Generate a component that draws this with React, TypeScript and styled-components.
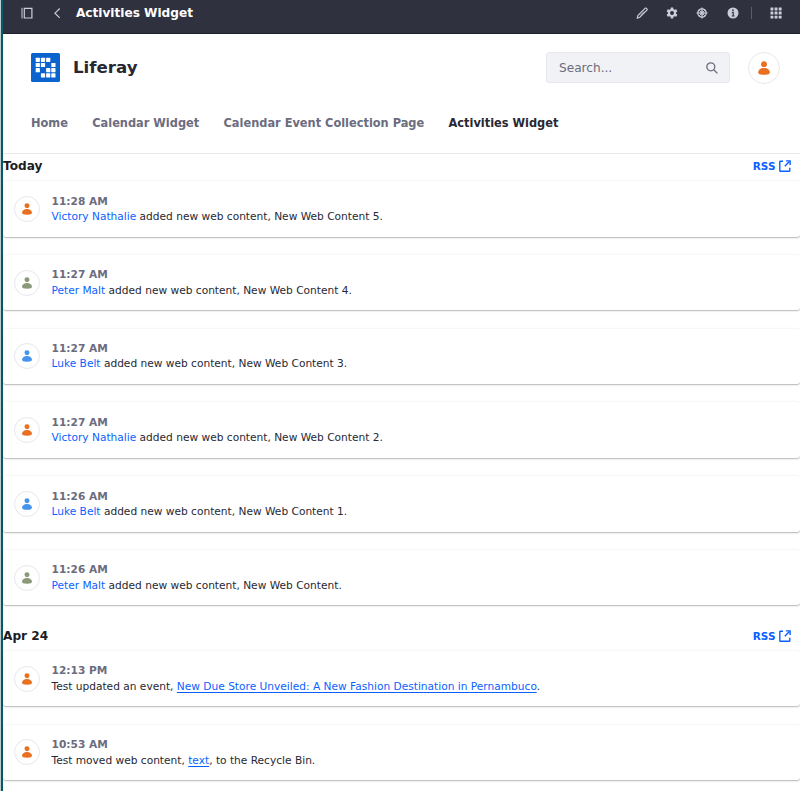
import React from "react";
import styled, { createGlobalStyle } from "styled-components";

const Global = createGlobalStyle`
  * { box-sizing: border-box; }
  html, body { margin: 0; background: #fff; }
  body { overflow: hidden; }
`;

const Page = styled.div`
  width: 800px;
  height: 791px;
  overflow: hidden;
  display: flex;
  background: #fff;
  font-family: "DejaVu Sans", sans-serif;
  color: #272833;
`;

const SideEdge = styled.div`
  flex: none;
  width: 3px;
  background: #005c68;
  border-left: 1px solid #c1c9cc;
`;

const Main = styled.div`
  flex: 1;
  min-width: 0;
`;

const ControlBar = styled.header`
  height: 34px;
  display: flex;
  align-items: flex-start;
  justify-content: space-between;
  background: #30313f;
  border-bottom: 1px solid #1e1f2c;
  color: #cdced9;
`;

const BarGroup = styled.div<{ $pl?: number; $pr?: number }>`
  display: flex;
  align-items: center;
  height: 26px;
  padding-left: ${(p) => p.$pl ?? 0}px;
  padding-right: ${(p) => p.$pr ?? 0}px;
`;

const BarIcon = styled.svg<{ $gap?: number }>`
  display: block;
  flex: none;
  width: 12px;
  height: 12px;
  margin-left: ${(p) => p.$gap ?? 0}px;
`;

const BarTitle = styled.h1`
  margin: 0 0 0 12.5px;
  font-size: 12.14px;
  line-height: 26px;
  font-weight: 700;
  color: #fff;
`;

const BarDivider = styled.span`
  width: 1px;
  height: 12px;
  margin-left: 12px;
  background: #5c5d6c;
`;

const SiteHeader = styled.div`
  height: 67px;
  padding: 0 20px 0 28px;
  display: flex;
  align-items: center;
`;

const Logo = styled.svg`
  width: 29px;
  height: 29px;
`;

const SiteName = styled.span`
  margin-left: 13px;
  padding-bottom: 1px;
  font-size: 16.65px;
  font-weight: 700;
  flex: 1;
`;

const SearchBox = styled.div`
  width: 184px;
  height: 31px;
  margin-right: 18px;
  padding: 0 11px 0 12px;
  display: flex;
  align-items: center;
  justify-content: space-between;
  border: 1px solid #e7e7ed;
  border-radius: 3px;
  background: #f1f2f5;
  color: #6b6c7e;
  font-size: 12.14px;
`;

const Avatar = styled.span<{ $size: number }>`
  flex: none;
  display: flex;
  align-items: center;
  justify-content: center;
  width: ${(p) => p.$size}px;
  height: ${(p) => p.$size}px;
  border: 1px solid #e7e7ed;
  border-radius: 50%;
  background: #fff;
`;

const Nav = styled.nav`
  height: 53px;
  padding: 13px 0 0 28px;
  display: flex;
  gap: 24.3px;
  border-bottom: 1px solid #e7e7ed;
`;

const NavLink = styled.a<{ $active?: boolean }>`
  font-size: 11.38px;
  line-height: 19px;
  font-weight: 700;
  white-space: nowrap;
  color: ${(p) => (p.$active ? "#272833" : "#6b6c7e")};
`;

const DayHeader = styled.div<{ $later?: boolean }>`
  height: ${(p) => (p.$later ? 26.5 : 26)}px;
  margin-top: ${(p) => (p.$later ? 18 : 0)}px;
  padding-right: 9px;
  padding-bottom: ${(p) => (p.$later ? 0.5 : 1.5)}px;
  display: flex;
  align-items: center;
  justify-content: space-between;
`;

const DayTitle = styled.h2`
  margin: 0;
  font-size: 12.14px;
  line-height: 18px;
  font-weight: 700;
  color: #1c1c24;
`;

const RssLink = styled.a`
  display: flex;
  align-items: center;
  gap: 3.5px;
  font-size: 10.5px;
  font-weight: 700;
  color: #0b5fff;
`;

const CardList = styled.div`
  display: flex;
  flex-direction: column;
  gap: 17.25px;
`;

const Card = styled.article`
  height: 56.5px;
  padding-left: 11px;
  display: flex;
  align-items: center;
  gap: 11.5px;
  border-top: 1px solid #f8f8f9;
  border-radius: 3px;
  background: #fff;
  box-shadow: 0 1px 1.5px rgba(0, 0, 0, 0.29);
`;

const CardText = styled.div`
  font-size: 10.61px;
  line-height: 15.3px;
  padding-top: 0.3px;
  white-space: nowrap;
  color: #272833;
`;

const Time = styled.div`
  font-weight: 700;
  color: #6b6c7e;
`;

const Message = styled.div<{ $linked?: boolean }>`
  padding-top: ${(p) => (p.$linked ? 0.5 : 0)}px;
`;

const Person = styled.a`
  color: #0b5fff;
`;

const UnderlinedLink = styled.a`
  color: #0b5fff;
  text-decoration: underline;
  text-decoration-thickness: 1px;
  text-underline-offset: 2px;
  text-decoration-skip-ink: none;
`;

const ORANGE = "#e87020";
const GREEN = "#8a9a78";
const BLUE = "#4593ec";

const UserGlyph = ({ color, size }: { color: string; size: number }) => (
  <svg width={size} height={size} viewBox="0 0 14 14" fill={color}>
    <circle cx="7" cy="3.2" r="2.900" />
    <path d="M7 7.100C3.400 7.100 1.200 9.200 1.200 11.500c0 1.500 1.600 2.200 5.800 2.200s5.800-.7 5.800-2.200C12.800 9.200 10.600 7.100 7 7.100z" />
  </svg>
);

const LOGO_CELLS = [
  [0, 0], [1, 0], [2, 0],
  [0, 1], [1, 1], [3, 1],
  [0, 2], [2, 2], [3, 2],
  [1, 3], [2, 3], [3, 3],
];

const Rss = () => (
  <RssLink>
    RSS
    <svg width="12" height="12" viewBox="0 0 12 12" fill="none" stroke="#0b5fff" strokeWidth="1.4">
      <path d="M4 1.200H1.400Q.8 1.200.8 1.800v8.900q0 .6.6.6h8.800q.6 0 .6-.6V7.800M5.800 6.200l4.600-4.600" />
      <path d="M6.900.9h4.200v4.200" />
    </svg>
  </RssLink>
);

type Activity = { time: string; color: string; linked?: boolean; body: React.ReactNode };

const content = (time: string, name: string, color: string, title: string): Activity => ({
  time,
  color,
  body: <><Person>{name}</Person> added new web content, {title}.</>,
});

const today: Activity[] = [
  content("11:28 AM", "Victory Nathalie", ORANGE, "New Web Content 5"),
  content("11:27 AM", "Peter Malt", GREEN, "New Web Content 4"),
  content("11:27 AM", "Luke Belt", BLUE, "New Web Content 3"),
  content("11:27 AM", "Victory Nathalie", ORANGE, "New Web Content 2"),
  content("11:26 AM", "Luke Belt", BLUE, "New Web Content 1"),
  content("11:26 AM", "Peter Malt", GREEN, "New Web Content"),
];

const earlier: Activity[] = [
  {
    time: "12:13 PM",
    color: ORANGE,
    linked: true,
    body: <>Test updated an event, <UnderlinedLink>New Due Store Unveiled: A New Fashion Destination in Pernambuco</UnderlinedLink>.</>,
  },
  {
    time: "10:53 AM",
    color: ORANGE,
    linked: true,
    body: <>Test moved web content, <UnderlinedLink>text</UnderlinedLink>, to the Recycle Bin.</>,
  },
];

const Cards = ({ items }: { items: Activity[] }) => (
  <CardList>
    {items.map((a, i) => (
      <Card key={i}>
        <Avatar $size={26}><UserGlyph color={a.color} size={12} /></Avatar>
        <CardText>
          <Time>{a.time}</Time>
          <Message $linked={a.linked}>{a.body}</Message>
        </CardText>
      </Card>
    ))}
  </CardList>
);

const GRID_STOPS = [0.5, 4.6, 8.7];

export default function App() {
  return (
    <Page>
      <Global />
      <SideEdge />
      <Main>
        <ControlBar>
          <BarGroup $pl={18.4}>
            <BarIcon viewBox="0 0 12 12" fill="none" stroke="currentColor">
              <path d="M1 .8v10.600" strokeWidth="1" />
              <path d="M3.300 1.300h7.600v9.700H3.300z" strokeWidth="1.200" />
            </BarIcon>
            <BarIcon $gap={18} viewBox="0 0 12 12" fill="none" stroke="currentColor" strokeWidth="1.200">
              <path d="M8.700 1.500L4 6.200l4.700 4.700" />
            </BarIcon>
            <BarTitle>Activities Widget</BarTitle>
          </BarGroup>
          <BarGroup $pr={18}>
            <BarIcon viewBox="0 0 12 12" fill="none" stroke="currentColor" strokeWidth="1.200" strokeLinejoin="round">
              <path d="M1.200 11.200l.8-2.900 7-7q.7-.6 1.400 0l.5.5q.6.7 0 1.400l-7 7z" />
              <path d="M4.400 8.300l3.800-3.800" strokeWidth=".8" />
            </BarIcon>
            <BarIcon $gap={18} viewBox="1 0 22 22.400" fill="currentColor" fillRule="evenodd">
              <path d="M9.800 1h4.400l.6 3.200 1.900 1.100 3.100-1.100 2.200 3.800-2.500 2.100v2.200l2.500 2.100-2.200 3.800-3.100-1.100-1.900 1.100-.6 3.300H9.800l-.6-3.300-1.900-1.100-3.100 1.100L2 14.400l2.500-2.100v-2.200L2 8l2.200-3.800 3.100 1.100 1.900-1.100zM12 7.600a3.700 3.700 0 1 0 0 7.400 3.700 3.700 0 0 0 0-7.400z" />
            </BarIcon>
            <BarIcon $gap={18.5} viewBox="0 0 12 12" fill="none" stroke="currentColor">
              <circle cx="6" cy="6" r="4.200" strokeWidth="1.200" />
              <circle cx="6" cy="6" r="2" strokeWidth=".9" />
              <path d="M6 .5v11M.5 6h11" strokeWidth="1.100" />
              <path d="M3 3l6 6M9 3L3 9" strokeWidth=".8" />
            </BarIcon>
            <BarIcon $gap={18.5} viewBox="0 0 12 12">
              <circle cx="6" cy="6" r="5.500" fill="currentColor" />
              <path d="M4.900 5.300h1.300V9M4.700 9h2.900" stroke="#30313f" strokeWidth="1.200" fill="none" />
              <circle cx="6" cy="3.100" r=".9" fill="#30313f" />
            </BarIcon>
            <BarDivider />
            <BarIcon $gap={18.5} viewBox="0 0 12 12" fill="currentColor">
              {GRID_STOPS.map((y) =>
                GRID_STOPS.map((x) => (
                  <rect key={`${x}-${y}`} x={x} y={y} width="2.900" height="2.900" rx=".3" />
                ))
              )}
            </BarIcon>
          </BarGroup>
        </ControlBar>
        <SiteHeader>
          <Logo viewBox="0 0 29 29">
            <rect width="29" height="29" rx="1.500" fill="#0b63ce" />
            {LOGO_CELLS.map(([x, y]) => (
              <rect key={`${x}-${y}`} x={4.7 + x * 5.2} y={4.7 + y * 5.2} width="4.200" height="4.200" rx=".6" fill="#fff" />
            ))}
          </Logo>
          <SiteName>Liferay</SiteName>
          <SearchBox>
            Search...
            <svg width="12" height="12" viewBox="0 0 12 12" fill="none" stroke="#6b6c7e" strokeWidth="1.300">
              <circle cx="4.800" cy="4.800" r="4" />
              <path d="M7.700 7.700l3.700 3.700" />
            </svg>
          </SearchBox>
          <Avatar $size={32}><UserGlyph color={ORANGE} size={14} /></Avatar>
        </SiteHeader>
        <Nav>
          <NavLink>Home</NavLink>
          <NavLink>Calendar Widget</NavLink>
          <NavLink>Calendar Event Collection Page</NavLink>
          <NavLink $active>Activities Widget</NavLink>
        </Nav>
        <DayHeader>
          <DayTitle>Today</DayTitle>
          <Rss />
        </DayHeader>
        <Cards items={today} />
        <DayHeader $later>
          <DayTitle>Apr 24</DayTitle>
          <Rss />
        </DayHeader>
        <Cards items={earlier} />
      </Main>
    </Page>
  );
}
